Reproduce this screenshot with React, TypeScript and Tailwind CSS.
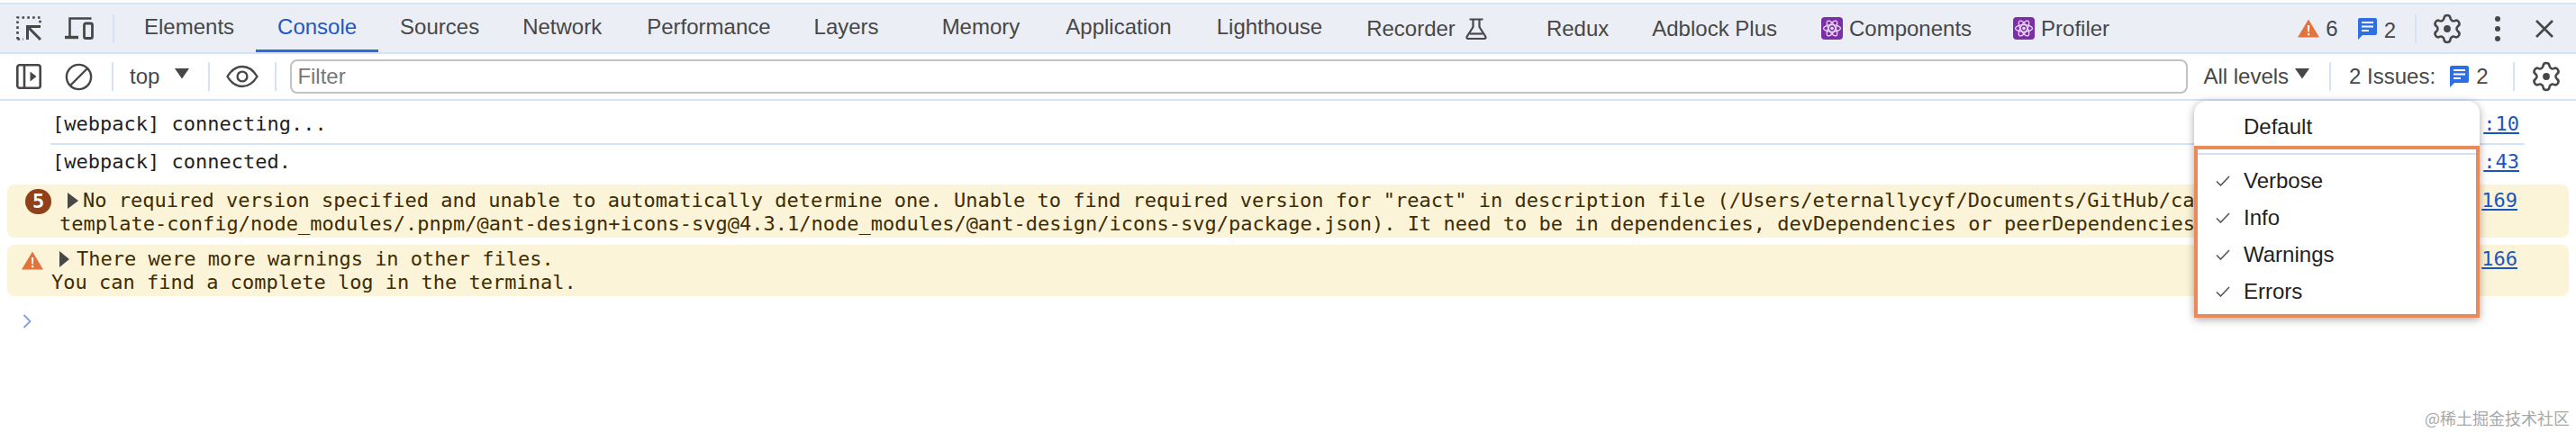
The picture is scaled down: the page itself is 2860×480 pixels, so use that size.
import React from "react";

const GEAR =
  "M9.671 4.136a2.34 2.34 0 0 1 4.659 0 2.34 2.34 0 0 0 3.319 1.915 2.34 2.34 0 0 1 2.33 4.033 2.34 2.34 0 0 0 0 3.831 2.34 2.34 0 0 1-2.33 4.033 2.34 2.34 0 0 0-3.319 1.915 2.34 2.34 0 0 1-4.659 0 2.34 2.34 0 0 0-3.32-1.915 2.34 2.34 0 0 1-2.33-4.033 2.34 2.34 0 0 0 0-3.831A2.34 2.34 0 0 1 6.35 6.051a2.34 2.34 0 0 0 3.319-1.915";

const Gear = () => (
  <svg width="36" height="36" viewBox="0 0 24 24" fill="none" stroke="#474747" strokeWidth="1.7">
    <path d={GEAR} />
    <circle cx="12" cy="12" r="2.6" fill="#474747" stroke="none" />
  </svg>
);

const Inspect = () => (
  <svg width="28" height="27" viewBox="0 0 28 27" fill="none" stroke="#474747" strokeWidth="2.6">
    <path d="M1.5 25.5V1.5H26.5V9M1.5 25.5H8" strokeDasharray="2.6 3.2" />
    <path d="M27 26 13 12M12.5 26V11.5H27" strokeWidth="3" />
  </svg>
);

const Device = () => (
  <svg width="32" height="25" viewBox="0 0 32 25" fill="none" stroke="#474747">
    <path d="M5.5 22V1.5H29.5" strokeWidth="2.6" />
    <path d="M0 22.5H15" strokeWidth="3.4" />
    <rect x="21.5" y="7" width="9" height="16.5" rx="1.8" strokeWidth="2.8" />
  </svg>
);

const Dock = () => (
  <svg width="28" height="28" viewBox="0 0 28 28" fill="none" stroke="#474747" strokeWidth="2.6">
    <rect x="1.3" y="1.3" width="25.4" height="25.4" rx="2.5" />
    <path d="M9 1.5V26.5" />
    <path d="M15.5 8.5 22.5 14 15.5 19.5Z" fill="#474747" stroke="none" />
  </svg>
);

const Clear = () => (
  <svg width="31" height="31" viewBox="0 0 31 31" fill="none" stroke="#474747" strokeWidth="2.4">
    <circle cx="15.5" cy="15.5" r="13.6" />
    <path d="M6 25 25 6" />
  </svg>
);

const Eye = () => (
  <svg width="36" height="26" viewBox="0 0 36 26" fill="none" stroke="#474747" strokeWidth="2.4">
    <path d="M1.5 13C6 5.5 11.5 2 18 2s12 3.5 16.5 11C30 20.5 24.5 24 18 24S6 20.5 1.5 13Z" />
    <circle cx="18" cy="13" r="5.4" />
  </svg>
);

const Caret = () => (
  <svg width="16" height="12" viewBox="0 0 16 12">
    <path d="M0 0H16L8 11.5Z" fill="#474747" />
  </svg>
);

const Flask = () => (
  <svg width="24" height="24" viewBox="0 0 24 24" fill="none" stroke="#474747" strokeWidth="2.2">
    <path d="M4.5 1.5H19.5M8.5 1.5V10L1.8 20.5C1 22 1.8 23 3 23H21C22.2 23 23 22 22.2 20.5L15.5 10V1.5" />
    <path d="M5 17.5H19" />
  </svg>
);

const ReactBadge = () => (
  <svg width="24" height="25" viewBox="0 0 24 25">
    <rect width="24" height="25" rx="4" fill="#7a2fa6" />
    <g fill="none" stroke="#eddcf5" strokeWidth="1.3">
      <ellipse cx="12" cy="12.5" rx="9.5" ry="3.8" />
      <ellipse cx="12" cy="12.5" rx="9.5" ry="3.8" transform="rotate(60 12 12.5)" />
      <ellipse cx="12" cy="12.5" rx="9.5" ry="3.8" transform="rotate(120 12 12.5)" />
    </g>
    <circle cx="12" cy="12.5" r="1.8" fill="#eddcf5" />
  </svg>
);

const WarnIcon = () => (
  <svg width="24" height="21" viewBox="0 0 24 21">
    <path d="M12 .5 24 20.5H0Z" fill="#e2733d" />
    <path d="M11 7h2.2l-.3 7.5h-1.6ZM11 16h2.2v2.2H11Z" fill="#fff" />
  </svg>
);

const MsgIcon = () => (
  <svg width="21" height="24" viewBox="0 0 21 24">
    <path d="M2 0H19a2 2 0 0 1 2 2V17a2 2 0 0 1-2 2H5L0 24V2A2 2 0 0 1 2 0Z" fill="#2f6fe4" />
    <path d="M4 5H17M4 9.5H17M4 14H12" stroke="#fff" strokeWidth="1.9" />
  </svg>
);

const Check = () => (
  <svg width="16" height="12" viewBox="0 0 16 12" fill="none" stroke="#555" strokeWidth="1.6">
    <path d="M1 6.5 5.5 11 15 1" />
  </svg>
);

const Divider = () => <div className="h-[32px] w-[2px] bg-[#d6e2f8]" />;

const tabs: { name: string; extra?: string }[] = [
  { name: "Elements" },
  { name: "Console" },
  { name: "Sources" },
  { name: "Network", extra: "mr-[2px]" },
  { name: "Performance" },
  { name: "Layers", extra: "mr-[22px]" },
  { name: "Memory", extra: "mr-[3px]" },
  { name: "Application", extra: "mr-[2px]" },
  { name: "Lighthouse", extra: "mr-[1px]" },
];

const Tab = ({ name, extra = "" }: { name: string; extra?: string }) => (
  <div
    className={
      name === "Console"
        ? "flex items-center px-[24px] border-b-[3px] border-[#2f6bd9] text-[#1f57c3] " + extra
        : "flex items-center px-[24px] border-b-[3px] border-transparent " + extra
    }
  >
    {name}
  </div>
);

const App: React.FC = () => {
  return (
    <div className="relative w-[2860px] h-[480px] overflow-hidden bg-white text-[24px] text-[#474747] font-['Liberation_Sans',Arial,sans-serif]">
      <div className="h-[3px] bg-white" />

      {/* tab strip */}
      <div className="flex items-stretch h-[55px] bg-[#eceef5] border-t-2 border-[#d3e3fd] border-b-0">
        <div className="flex items-center pl-[18px] pr-[9px] gap-[26px]">
          <Inspect />
          <Device />
          <div className="ml-[-5px]">
            <Divider />
          </div>
        </div>
        {tabs.map((t) => (
          <Tab key={t.name} name={t.name} extra={t.extra} />
        ))}
        <div className="flex items-center pl-[24px] pr-[42px] gap-[11px]">
          Recorder <Flask />
        </div>
        <div className="flex items-center px-[24px]">Redux</div>
        <div className="flex items-center px-[24px]">Adblock Plus</div>
        <div className="flex items-center pl-[25px] pr-[46px] gap-[7px]">
          <ReactBadge /> Components
        </div>
        <div className="flex items-center gap-[7px]">
          <ReactBadge /> Profiler
        </div>
        <div className="ml-auto flex items-center pr-[24px]">
          <WarnIcon />
          <span className="ml-[7px]">6</span>
          <span className="ml-[22px]">
            <MsgIcon />
          </span>
          <span className="ml-[8px] mt-[4px]">2</span>
          <div className="ml-[21px]">
            <Divider />
          </div>
          <div className="ml-[16px]">
            <Gear />
          </div>
          <div className="ml-[35px] flex flex-col gap-[5px]">
            <div className="w-[6px] h-[6px] rounded-full bg-[#474747]" />
            <div className="w-[6px] h-[6px] rounded-full bg-[#474747]" />
            <div className="w-[6px] h-[6px] rounded-full bg-[#474747]" />
          </div>
          <svg className="ml-[38px]" width="22" height="22" viewBox="0 0 22 22" stroke="#474747" strokeWidth="2.6">
            <path d="M2 2 20 20M20 2 2 20" />
          </svg>
        </div>
      </div>

      {/* console toolbar */}
      <div className="flex items-center h-[54px] bg-white border-y-2 border-t-[#d3e3fd] border-b-[#d3e3fd]">
        <div className="ml-[18px]">
          <Dock />
        </div>
        <div className="ml-[26px]">
          <Clear />
        </div>
        <div className="ml-[21px]">
          <Divider />
        </div>
        <span className="ml-[18px]">top</span>
        <div className="ml-[17px] mb-[6px]">
          <Caret />
        </div>
        <div className="ml-[21px]">
          <Divider />
        </div>
        <div className="ml-[18px]">
          <Eye />
        </div>
        <div className="ml-[18px]">
          <Divider />
        </div>
        <div className="ml-[15px] flex items-center w-[2107px] h-[38px] px-[6px] rounded-lg border-2 border-[#c2c2c2] text-[#777]">
          Filter
        </div>
        <span className="ml-[17px]">All levels</span>
        <div className="ml-[7px] mb-[6px]">
          <Caret />
        </div>
        <div className="ml-[22px]">
          <Divider />
        </div>
        <span className="ml-[20px]">2 Issues:</span>
        <div className="ml-[16px]">
          <MsgIcon />
        </div>
        <span className="ml-[8px]">2</span>
        <div className="ml-[28px]">
          <Divider />
        </div>
        <div className="ml-[17px]">
          <Gear />
        </div>
      </div>

      {/* console output */}
      <div className="text-[22px] leading-[26px] text-[#1f1f1f] font-['DejaVu_Sans_Mono',monospace]">
        <div className="flex justify-between h-[47px] items-center pl-[58px] pr-[63px] pt-[4px]">
          <span>[webpack] connecting...</span>
          <a className="text-[#1a56c0] underline">:10</a>
        </div>
        <div className="ml-[56px] mr-[57px] h-[2px] bg-[#d3e3fd]" />
        <div className="flex justify-between h-[42px] items-center pl-[58px] pr-[63px] pb-[4px]">
          <span>[webpack] connected.</span>
          <a className="text-[#1a56c0] underline">:43</a>
        </div>

        <div className="flex mx-[8px] mt-[2px] h-[59px] rounded-lg bg-[#fcf4d8] text-[#3f2c00] pt-[5px] pr-[57px]">
          <div className="relative flex-1 min-w-0 overflow-hidden whitespace-nowrap pl-[58px]">
            <div className="flex items-center">
              <svg className="ml-[9px] mr-[5px]" width="12" height="18" viewBox="0 0 12 18">
                <path d="M0 0 12 9 0 18Z" fill="#474747" />
              </svg>
              No required version specified and unable to automatically determine one. Unable to find required version for "react" in description file (/Users/eternallycyf/Documents/GitHub/ca
            </div>
            <div>
              template-config/node_modules/.pnpm/@ant-design+icons-svg@4.3.1/node_modules/@ant-design/icons-svg/package.json). It need to be in dependencies, devDependencies or peerDependencies
            </div>
            <div className="absolute left-[20px] top-[0px] w-[29px] h-[28px] rounded-full bg-[#8f4119] text-white font-bold flex items-center justify-center">
              5
            </div>
          </div>
          <a className="text-[#1a56c0] underline">169</a>
        </div>

        <div className="flex mx-[8px] mt-[8px] h-[57px] rounded-lg bg-[#fcf4d8] text-[#3f2c00] pt-[3px] pr-[57px]">
          <div className="relative flex-1 min-w-0 overflow-hidden whitespace-nowrap pl-[49px]">
            <div className="flex items-center">
              <svg className="ml-[9px] mr-[8px]" width="11" height="18" viewBox="0 0 11 18">
                <path d="M0 0 11 9 0 18Z" fill="#474747" />
              </svg>
              There were more warnings in other files.
            </div>
            <div>You can find a complete log in the terminal.</div>
            <div className="absolute left-[16px] top-[4px]">
              <WarnIcon />
            </div>
          </div>
          <a className="text-[#1a56c0] underline">166</a>
        </div>

        <svg className="ml-[25px] mt-[20px]" width="10" height="16" viewBox="0 0 10 16" fill="none" stroke="#7d9de6" strokeWidth="1.8">
          <path d="M1.5 1 8.5 8 1.5 15" />
        </svg>
      </div>

      {/* log level dropdown */}
      <div className="absolute left-[2436px] top-[112px] w-[317px] h-[241px] rounded-t-[14px] bg-white shadow-[0_2px_10px_rgba(0,0,0,0.35)] text-[#1f1f1f]">
        <div className="flex items-center h-[50px] pl-[55px] pt-[8px]">Default</div>
        <div className="h-[191px] border-4 border-[#e98a58] pt-[4px]">
          <div className="h-[2px] bg-[#d8def6]" />
          <div className="pt-[8px]">
            {["Verbose", "Info", "Warnings", "Errors"].map((l) => (
              <div key={l} className="flex items-center h-[41px] pl-[20px]">
                <Check />
                <span className="ml-[15px]">{l}</span>
              </div>
            ))}
          </div>
        </div>
      </div>

      {/* watermark */}
      <div className="absolute right-[7px] bottom-[6px] text-[18px] leading-[20px] text-[#a8a8a8] font-['Noto_Sans_CJK_SC',sans-serif]">
        @稀土掘金技术社区
      </div>
    </div>
  );
};

export default App;
